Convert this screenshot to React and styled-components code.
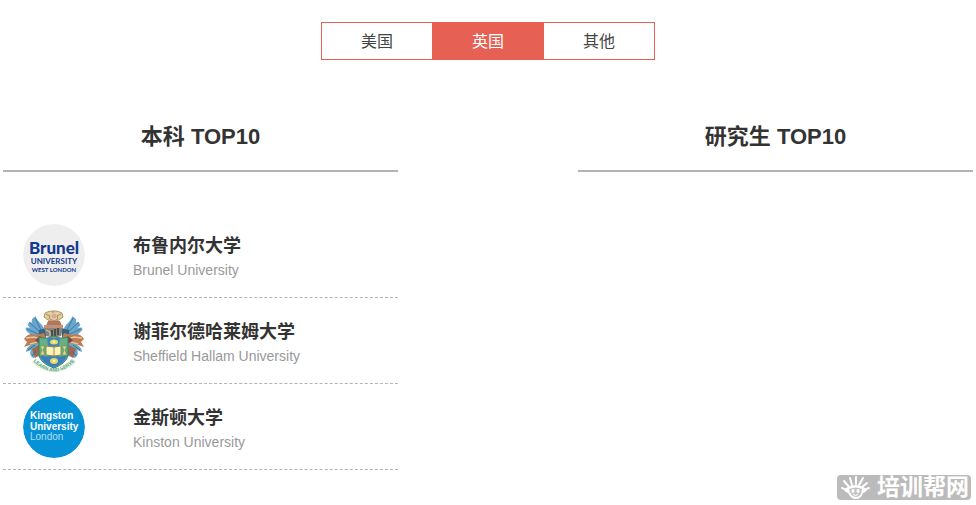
import React, { useState } from 'react'
import styled, { createGlobalStyle } from 'styled-components'

const REGIONS = ['美国', '英国', '其他']

const UNDERGRADUATE = [
  { name: '布鲁内尔大学', english: 'Brunel University', Logo: BrunelLogo },
  {
    name: '谢菲尔德哈莱姆大学',
    english: 'Sheffield Hallam University',
    Logo: SheffieldLogo,
  },
  { name: '金斯顿大学', english: 'Kinston University', Logo: KingstonLogo },
]

export default function App() {
  const [region, setRegion] = useState('英国')

  return (
    <Page>
      <GlobalStyle />
      <Tabs>
        {REGIONS.map((item) => (
          <Tab
            key={item}
            type="button"
            $active={item === region}
            aria-pressed={item === region}
            onClick={() => setRegion(item)}
          >
            {item}
          </Tab>
        ))}
      </Tabs>
      <Columns>
        <Ranking title="本科 TOP10" schools={UNDERGRADUATE} />
        <Ranking title="研究生 TOP10" schools={[]} />
      </Columns>
      <Watermark>
        <MascotIcon />
        培训帮网
      </Watermark>
    </Page>
  )
}

const Ranking = ({ title, schools }) => (
  <section>
    <Title>{title}</Title>
    <List>
      {schools.map(({ name, english, Logo }) => (
        <Row key={name}>
          <Logo />
          <SchoolText>
            <Name>{name}</Name>
            <English>{english}</English>
          </SchoolText>
        </Row>
      ))}
    </List>
  </section>
)

function BrunelLogo() {
  return (
    <LogoSvg viewBox="0 0 62 62" aria-hidden="true">
      <circle cx="31" cy="31" r="31" fill="#eeeeee" />
      <g fill="#12398c" textAnchor="middle" fontFamily="Lato, sans-serif">
        <text x="31" y="30" fontSize="17" fontWeight="900">
          Brunel
        </text>
        <text x="31" y="40" fontSize="8" fontWeight="700">
          UNIVERSITY
        </text>
        <text x="31" y="48" fontSize="6" fontWeight="700">
          WEST LONDON
        </text>
      </g>
    </LogoSvg>
  )
}

function SheffieldLogo() {
  return (
    <LogoSvg viewBox="0 0 62 62" aria-hidden="true">
      {/* feathers and mantling, mirrored to the right */}
      <g id="mantling">
        <path
          d="M20 30L10 26C6 24 3 21 1 17l6 1C4 15 3 12 3 9l6 4c-1-4 1-7 3-9 1 5 4 8 7 11l4 6z"
          fill="#6aa7cd"
        />
        <path
          d="M4 19l11 5M6 12l11 10M12 8l6 12"
          stroke="#3c79a8"
          strokeWidth="1"
          fill="none"
        />
        <path d="M16 20l8-2-1 9-8 3z" fill="#39627d" />
        <path
          d="M1 29c3-5 8-6 12-4l8-2 2 5-6 9-6 2-4-4-6 2 3-5z"
          fill="#bd7c58"
        />
        <path
          d="M3 28l8-1 6 2M7 34l8-2"
          stroke="#efc290"
          strokeWidth="1.5"
          fill="none"
        />
        <path d="M12 30l5-4 3 4-5 3z" fill="#7a4a3c" />
        <path
          d="M14 33c-6 1-11 4-11 9l5-2c-2 4 0 6 2 8l7-2V35z"
          fill="#6aa7c9"
        />
        <path d="M9 39l7-4 1 9-5 4z" fill="#a0694d" />
        <path d="M5 40l7-5M9 46l4-5" stroke="#386c87" fill="none" />
      </g>
      <use href="#mantling" transform="matrix(-1 0 0 1 62 0)" />
      {/* rose and helmet */}
      <path
        d="M22 3l5-2h7l5 2 1 4-4 3-5 2-6-2-4-3z"
        fill="#ded29c"
        stroke="#a89862"
        strokeWidth="1"
      />
      <path
        d="M23 4l4 2-1 3M38 4l-4 2 1 3M30 1v2M27 9l4 2 4-2"
        stroke="#b5806c"
        strokeWidth="1"
        fill="none"
      />
      <circle cx="31" cy="6" r="2.5" fill="#d9a9a0" />
      <path d="M25 11h12l2 5H23z" fill="#b8735c" />
      <path d="M21 16c5-3 15-3 19 0l-2 10-7 2-8-2z" fill="#87847a" />
      <path d="M21 15h19v3H21z" fill="#c98f72" />
      <path
        d="M29 20v6M32 19v7M35 18v7"
        stroke="#373e3e"
        strokeWidth="1.5"
      />
      <path d="M23 20l4 2v4" stroke="#d4d1bd" strokeWidth="1" fill="none" />
      {/* shield */}
      <path
        d="M16 27c6 2 11 1 15-1 4 2 9 3 14 1v17c0 6-6 11-14 14-9-3-15-8-15-14z"
        fill="#67b087"
        stroke="#367e61"
      />
      <path
        d="M24 28h13l-1 8 1 10-6 9-7-9 1-10z"
        fill="#3f84bd"
      />
      <path
        d="M17 46c4-1 9 1 14 4 5-3 9-5 13-4-2 5-7 9-13 11-7-2-12-6-14-11z"
        fill="#3a7fbd"
      />
      <path
        d="M23 36l8 1 7-1v9l-7 1-8-1z"
        fill="#fbf3ba"
        stroke="#8f8a4b"
      />
      <path d="M31 37v9" stroke="#a98b41" />
      <path
        d="M17 36h5l-2 4 2 5h-5l2-5zM39 36h5l-2 4 2 5h-5l2-5z"
        fill="#e2d57a"
        stroke="#4e8a5a"
        strokeWidth="0.5"
      />
      <ellipse cx="31" cy="32" rx="4" ry="2.5" fill="#eadb5b" />
      <circle cx="31" cy="32" r="1" fill="#fff6c0" />
      <ellipse cx="31" cy="51" rx="4" ry="3" fill="#e6d669" />
      <circle cx="31" cy="51" r="1.3" fill="#fff6c0" />
      {/* motto */}
      <path
        id="motto"
        d="M10 51Q31 72 52 51"
        fill="none"
        stroke="#e7f0e5"
        strokeWidth="4"
      />
      <text
        fontSize="5"
        fontWeight="700"
        fontFamily="Liberation Sans, sans-serif"
        fill="#55a77b"
      >
        <textPath href="#motto" startOffset="50%" textAnchor="middle">
          LEARN AND SERVE
        </textPath>
      </text>
    </LogoSvg>
  )
}

function KingstonLogo() {
  return (
    <LogoSvg viewBox="0 0 62 62" aria-hidden="true">
      <circle cx="31" cy="31" r="31" fill="#0592d7" />
      <g
        fill="#fff"
        fontSize="10"
        fontFamily="Liberation Sans, Arial, sans-serif"
      >
        <text x="7" y="23" fontWeight="700">
          Kingston
        </text>
        <text x="7" y="34" fontWeight="700">
          University
        </text>
        <text x="7" y="44" fillOpacity="0.7">
          London
        </text>
      </g>
    </LogoSvg>
  )
}

const MascotIcon = () => (
  <svg width="36" height="25" viewBox="0 0 36 25" aria-hidden="true">
    <path
      d="M10 15l-5-2M12 12L7 6M15 10l-2-7M19 9V2M22 10l4-7M25 12l5-4M27 15l5-2"
      stroke="#fff"
      strokeWidth="2"
      strokeLinecap="round"
    />
    <path
      d="M9 13q10-6 19 0v2h2q-2 3-4 3-2 6-7 6t-8-6q-2 0-4-3h2z"
      fill="#fff"
    />
    <path d="M12 14q7-3 13 0 0 7-6 8-6-1-7-8z" fill="#c4c4c4" />
    <ellipse cx="16" cy="16" rx="1.5" ry="2" fill="#fff" />
    <ellipse cx="21" cy="16" rx="1.5" ry="2" fill="#fff" />
    <path d="M16 19.5q2.500 2 5 0" stroke="#fff" fill="none" />
  </svg>
)

const GlobalStyle = createGlobalStyle`
  * {
    box-sizing: border-box;
  }

  body {
    margin: 0;
    background: #fff;
    color: #333;
    font-family: 'Liberation Sans', Arial, 'Noto Sans CJK SC', sans-serif;
  }
`

const Page = styled.main`
  position: relative;
  min-height: 100vh;
  padding: 22px 3px 35px;
`

const Tabs = styled.div`
  display: flex;
  justify-content: center;
`

const Tab = styled.button`
  position: relative;
  z-index: ${({ $active }) => ($active ? 1 : 0)};
  width: 112px;
  height: 38px;
  padding: 0 0 2px;
  border: 1px solid #e66054;
  background: ${({ $active }) => ($active ? '#e66054' : '#fff')};
  color: ${({ $active }) => ($active ? '#fff' : '#444')};
  font-family: inherit;
  font-size: 16px;
  cursor: pointer;

  & + & {
    margin-left: -1px;
  }
`

const Columns = styled.div`
  display: grid;
  grid-template-columns: 1fr 1fr;
  gap: 180px;
  margin-top: 54px;
`

const Title = styled.h2`
  margin: 0;
  padding: 7px 0 17px;
  border-bottom: 2px solid #b3b3b3;
  font-size: 22px;
  line-height: 32px;
  text-align: center;
`

const List = styled.ul`
  margin: 40px 0 0;
  padding: 0;
  list-style: none;
`

const Row = styled.li`
  display: flex;
  align-items: center;
  gap: 48px;
  height: 86px;
  padding: 0 20px;
  border-bottom: 1px dashed #b3b3b3;
`

const LogoSvg = styled.svg`
  flex: none;
  width: 62px;
  height: 62px;
  border-radius: 50%;
`

const SchoolText = styled.div`
  padding-top: 4px;
`

const Name = styled.h3`
  margin: 0;
  font-size: 18px;
  line-height: 26px;
`

const English = styled.p`
  margin: 0;
  color: #999;
  font-size: 14px;
  line-height: 22px;
`

const Watermark = styled.div`
  position: absolute;
  right: 5px;
  bottom: 5px;
  display: flex;
  align-items: center;
  gap: 4px;
  height: 25px;
  padding-right: 2px;
  border-radius: 4px;
  background: #bbb;
  color: #fff;
  font-size: 23px;
  font-weight: 700;
  line-height: 25px;
`
